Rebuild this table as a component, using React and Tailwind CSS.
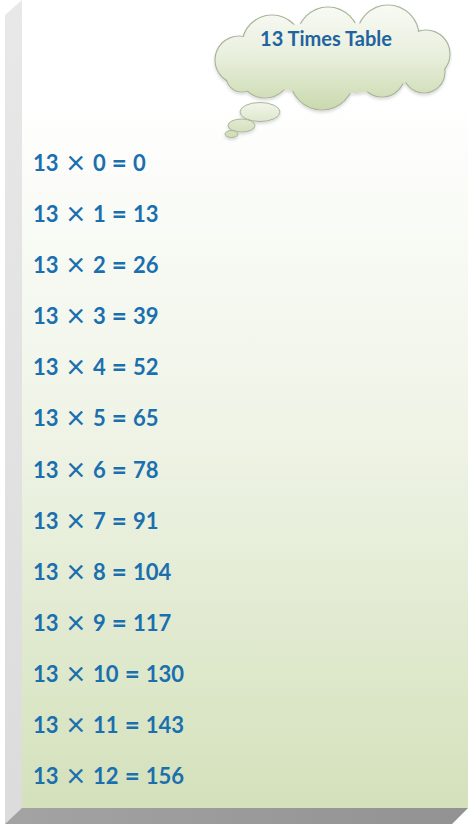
import React from "react";

const rows = Array.from({ length: 13 }, (_, i) => ({ n: i, r: 13 * i }));

function Cloud() {
  const lobes = [
    [62, 45, 30],
    [118, 38, 31],
    [178, 36, 31],
    [216, 54, 24],
    [214, 72, 21],
    [172, 74, 23],
    [112, 78, 32],
    [55, 72, 26],
    [29, 60, 24],
    [32, 76, 16],
  ];
  return (
    <svg width="250" height="140" viewBox="0 0 250 140" className="overflow-visible">
      <defs>
        <linearGradient id="cg" x1="0" y1="5" x2="0" y2="110" gradientUnits="userSpaceOnUse">
          <stop offset="0" stopColor="#f8faf4" />
          <stop offset="0.45" stopColor="#eaf0df" />
          <stop offset="1" stopColor="#cad9ae" />
        </linearGradient>
        <linearGradient id="bg" x1="0" y1="100" x2="0" y2="138" gradientUnits="userSpaceOnUse">
          <stop offset="0" stopColor="#f4f7ee" />
          <stop offset="1" stopColor="#cfdcb4" />
        </linearGradient>
        <filter id="sh" x="-10%" y="-10%" width="120%" height="130%">
          <feDropShadow dx="0" dy="2" stdDeviation="1.5" floodColor="#000" floodOpacity="0.15" />
        </filter>
      </defs>
      <g filter="url(#sh)">
        {lobes.map(([x, y, r], i) => (
          <circle key={"s" + i} cx={x} cy={y} r={r} fill="#b8c2a8" stroke="#a9b59a" strokeWidth="1.2" />
        ))}
        <ellipse cx="122" cy="58" rx="100" ry="36" fill="url(#cg)" />
        {lobes.map(([x, y, r], i) => (
          <circle key={"f" + i} cx={x} cy={y} r={r - 0.6} fill="url(#cg)" />
        ))}
        <ellipse cx="50" cy="112" rx="20" ry="9.5" fill="url(#bg)" stroke="#a9b59a" strokeWidth="1" />
        <ellipse cx="31.5" cy="125.5" rx="13.5" ry="6.5" fill="url(#bg)" stroke="#a9b59a" strokeWidth="1" />
        <ellipse cx="21.5" cy="134" rx="6.5" ry="3.5" fill="url(#bg)" stroke="#a9b59a" strokeWidth="1" />
      </g>
    </svg>
  );
}

export default function App() {
  return (
    <div
      className="w-[474px] h-[829px] bg-white pl-[5px] pr-[6px] overflow-hidden"
      style={{ fontFamily: "Lato, 'Open Sans', sans-serif" }}
    >
      <div className="flex h-[808px]">
        <div
          className="w-[17px] bg-gradient-to-b from-[#e8e8e8] to-[#dcdcdc]"
          style={{ clipPath: "polygon(0 15px, 100% 0, 100% 100%, 0 100%)" }}
        />
        <div className="flex-1 flex flex-col bg-gradient-to-b from-white from-[12%] via-[#eef3e5] via-[55%] to-[#d4e1bb] pl-[11px]">
          <div className="h-[137px]">
            <div className="ml-[177px] relative w-[250px]">
              <Cloud />
              <div className="absolute left-[16px] top-[28px] w-[200px] text-center text-[20px] leading-[20px] font-bold text-[#1f63a1]">
                13 Times Table
              </div>
            </div>
          </div>
          <div className="flex flex-col">
            {rows.map((row) => (
              <div
                key={row.n}
                className="h-[51.17px] flex items-center text-[22px] leading-none font-bold text-[#1a6fae]"
              >
                <span>13</span>
                <span className="ml-[8px] mr-[8px] text-[32px] leading-none font-normal -translate-y-[1px]">×</span>
                <span>{row.n}</span>
                <span className="mx-[6px] text-[26px] leading-none -translate-y-[1px]">=</span>
                <span>{row.r}</span>
              </div>
            ))}
          </div>
        </div>
      </div>
      <div
        className="h-[16px] bg-[#dcdcdc]"
        style={{ clipPath: "polygon(0 0, 463px 0, 447px 100%, 0 100%)" }}
      >
        <div
          className="h-full bg-gradient-to-r from-[#a3a3a3] to-[#929292]"
          style={{ clipPath: "polygon(17px 0, 100% 0, 100% 100%, 0 100%)" }}
        />
      </div>
    </div>
  );
}
